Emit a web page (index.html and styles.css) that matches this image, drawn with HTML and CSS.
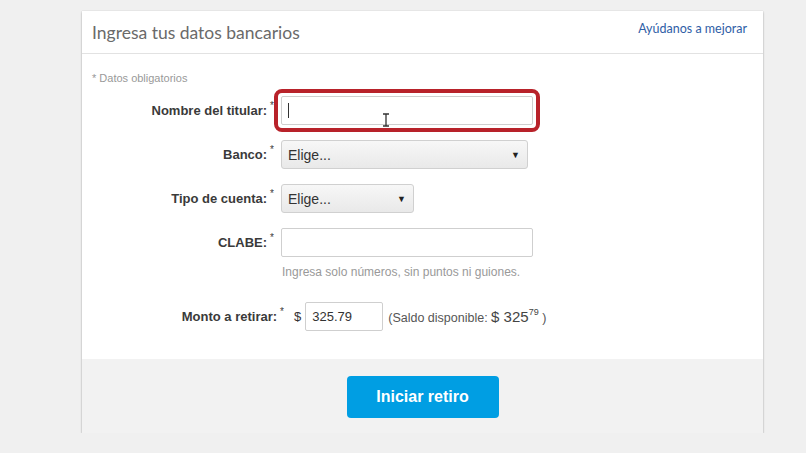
FILE: index.html
```html
<!DOCTYPE html>
<html lang="es">
<head>
    <meta charset="UTF-8">
    <meta name="viewport" content="width=device-width, initial-scale=1.0">
    <title>Datos bancarios</title>
    <link rel="stylesheet" href="styles.css">
</head>
<body>
    <div class="card">
        <div class="card-header">
            <h1>Ingresa tus datos bancarios</h1>
            <a class="help-link" href="#">Ayúdanos a mejorar</a>
        </div>

        <div class="card-body">
            <div class="required-note">* Datos obligatorios</div>

            <div class="form-row">
                <label class="field-label">Nombre del titular:<sup>*</sup></label>
                <div class="focus-ring">
                    <div class="text-input wide"><span class="caret"></span></div>
                    <svg class="ibeam" width="8" height="14" viewBox="0 0 8 14">
                        <path d="M1 1h6M4 1v12M1 13h6" stroke="#333" stroke-width="1.3" fill="none"/>
                    </svg>
                </div>
            </div>

            <div class="form-row">
                <label class="field-label">Banco:<sup>*</sup></label>
                <div class="select bank">
                    <span>Elige...</span>
                    <span class="arrow">▼</span>
                </div>
            </div>

            <div class="form-row">
                <label class="field-label">Tipo de cuenta:<sup>*</sup></label>
                <div class="select account">
                    <span>Elige...</span>
                    <span class="arrow">▼</span>
                </div>
            </div>

            <div class="form-row clabe-row">
                <label class="field-label">CLABE:<sup>*</sup></label>
                <div class="text-input wide"></div>
            </div>
            <div class="hint">Ingresa solo números, sin puntos ni guiones.</div>

            <div class="form-row amount-row">
                <label class="field-label">Monto a retirar:<sup>*</sup></label>
                <span class="currency">$</span>
                <div class="text-input amount">325.79</div>
                <span class="balance">(Saldo disponible: <span class="balance-value">$ 325<sup>79</sup></span> )</span>
            </div>
        </div>

        <div class="card-footer">
            <button class="submit-button">Iniciar retiro</button>
        </div>
    </div>
</body>
</html>
```

FILE: styles.css
```css
body {
    margin: 0;
    padding: 11px 0 0 82px;
    background: #f0f0f0;
    font-family: "Liberation Sans", Arial, sans-serif;
    color: #333;
}

.card {
    width: 681px;
    background: #fff;
    box-shadow: 0 1px 2px rgba(0, 0, 0, 0.28), 0 0 1px rgba(0, 0, 0, 0.12);
}

.card-header {
    display: flex;
    justify-content: space-between;
    align-items: flex-start;
    height: 42px;
    padding: 0 16px 0 10px;
    border-bottom: 1px solid #e2e2e2;
}

.card-header h1 {
    margin: 11px 0 0 0;
    font-family: Lato, sans-serif;
    font-size: 17.5px;
    line-height: 22px;
    font-weight: 400;
    color: #6a6a6a;
}

.help-link {
    margin-top: 10px;
    font-family: Lato, sans-serif;
    font-size: 12.5px;
    line-height: 16px;
    color: #2f5ea6;
    text-decoration: none;
}

.card-body {
    padding: 18px 0 28px 10px;
}

.required-note {
    font-size: 11px;
    line-height: 13px;
    color: #999;
    margin-bottom: 11px;
}

.form-row {
    display: flex;
    align-items: center;
    height: 29px;
    margin-bottom: 15px;
}

.field-label {
    width: 182px;
    margin-right: 7px;
    text-align: right;
    font-size: 13px;
    font-weight: 700;
    color: #3a3a3a;
}

.field-label sup {
    font-size: 10px;
    font-weight: 400;
    margin-left: 3px;
    vertical-align: 6px;
    line-height: 0;
}

.text-input {
    box-sizing: border-box;
    height: 29px;
    border: 1px solid #cfcfcf;
    border-radius: 2px;
    background: #fff;
    font-size: 13px;
    line-height: 27px;
    padding: 0 6px;
    color: #333;
}

.text-input.wide {
    width: 252px;
}

.focus-ring {
    position: relative;
    outline: 4px solid #b8222a;
    outline-offset: 3px;
    border-radius: 1px;
}

.caret {
    display: inline-block;
    width: 1px;
    height: 15px;
    margin-top: 6px;
    background: #333;
    vertical-align: top;
}

.ibeam {
    position: absolute;
    left: 101px;
    top: 17px;
}

.select {
    box-sizing: border-box;
    display: flex;
    justify-content: space-between;
    align-items: center;
    height: 29px;
    padding: 0 7px 0 6px;
    border: 1px solid #d0d0d0;
    border-radius: 3px;
    background: linear-gradient(#f7f7f7, #e9e9e9);
    font-size: 14px;
    color: #333;
}

.select.bank {
    width: 247px;
}

.select.account {
    width: 133px;
}

.select .arrow {
    font-size: 9px;
    color: #222;
}

.clabe-row {
    margin-bottom: 8px;
}

.hint {
    margin-left: 190px;
    font-size: 12px;
    line-height: 14px;
    color: #999;
    margin-bottom: 23px;
}

.amount-row {
    margin-bottom: 0;
}

.amount-row .field-label {
    width: 192px;
    margin-right: 10px;
}

.currency {
    font-size: 13px;
    margin-right: 4px;
}

.text-input.amount {
    width: 78px;
}

.balance {
    margin-left: 5px;
    font-size: 12.5px;
    color: #555;
}

.balance-value {
    font-size: 15px;
    color: #444;
}

.balance-value sup {
    font-size: 9px;
    vertical-align: 7px;
    line-height: 0;
}

.card-footer {
    display: flex;
    justify-content: center;
    padding: 17px 0 15px 0;
    background: #f2f2f2;
}

.submit-button {
    width: 152px;
    height: 42px;
    border: none;
    border-radius: 4px;
    background: #009ee3;
    color: #fff;
    font-family: "Liberation Sans", Arial, sans-serif;
    font-size: 16px;
    font-weight: 700;
    cursor: pointer;
}
```
